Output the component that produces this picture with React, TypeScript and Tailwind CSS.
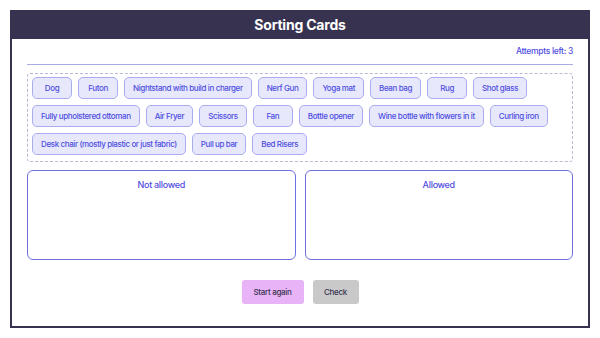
const items = [
  "Dog",
  "Futon",
  "Nightstand with build in charger",
  "Nerf Gun",
  "Yoga mat",
  "Bean bag",
  "Rug",
  "Shot glass",
  "Fully upholstered ottoman",
  "Air Fryer",
  "Scissors",
  "Fan",
  "Bottle opener",
  "Wine bottle with flowers in it",
  "Curling iron",
  "Desk chair (mostly plastic or just fabric)",
  "Pull up bar",
  "Bed Risers",
];

export default function App() {
  return (
    <div className="w-[600px] h-[338px] bg-white pt-[10px] pl-[10px] font-['Inter',sans-serif]">
      <div className="w-[580px] h-[318px] border-2 border-t-0 border-[#37324f] flex flex-col">
        <div className="h-[29px] bg-[#37324f] flex items-center justify-center -mx-[2px]">
          <h1 className="text-white text-[14px] font-bold tracking-[-0.2px]">Sorting Cards</h1>
        </div>

        <div className="px-[15px] flex flex-col">
          <div className="flex justify-end pt-[6px] pb-[6px] border-b border-[#a8abe8]">
            <span className="text-[#4f4ee0] text-[8.5px] font-medium tracking-[-0.3px]">Attempts left: 3</span>
          </div>

          {/* card pool */}
          <div className="mt-[8px] h-[89px] border border-dashed border-[#b7b9d6] rounded-[3px] px-[4px] pt-[3px] flex flex-wrap content-start gap-x-[6px] gap-y-[6px]">
            {items.map((item) => (
              <div
                key={item}
                className="h-[22px] min-w-[40px] px-[8px] flex items-center justify-center rounded-[5px] bg-[#e7e8fc] border border-[#a9acef] text-[#4f4ee0] text-[8px] font-medium tracking-[-0.38px]"
              >
                {item}
              </div>
            ))}
          </div>

          {/* drop zones */}
          <div className="mt-[8px] grid grid-cols-2 gap-[9px]">
            <div className="h-[90px] border border-[#6c70e0] rounded-[6px] flex justify-center pt-[7px]">
              <span className="text-[#4f4ee0] text-[9px] font-medium tracking-[-0.3px]">Not allowed</span>
            </div>
            <div className="h-[90px] border border-[#6c70e0] rounded-[6px] flex justify-center pt-[7px]">
              <span className="text-[#4f4ee0] text-[9px] font-medium tracking-[-0.3px]">Allowed</span>
            </div>
          </div>

          <div className="mt-[20px] flex justify-center gap-[9px]">
            <button className="h-[24px] w-[62px] rounded-[3px] bg-[#e9b3f8] text-[#37324f] text-[8px] font-medium tracking-[-0.3px]">
              Start again
            </button>
            <button className="h-[24px] w-[46px] rounded-[3px] bg-[#c9c9c9] text-[#37324f] text-[8px] font-medium tracking-[-0.3px]">
              Check
            </button>
          </div>
        </div>
      </div>
    </div>
  );
}
